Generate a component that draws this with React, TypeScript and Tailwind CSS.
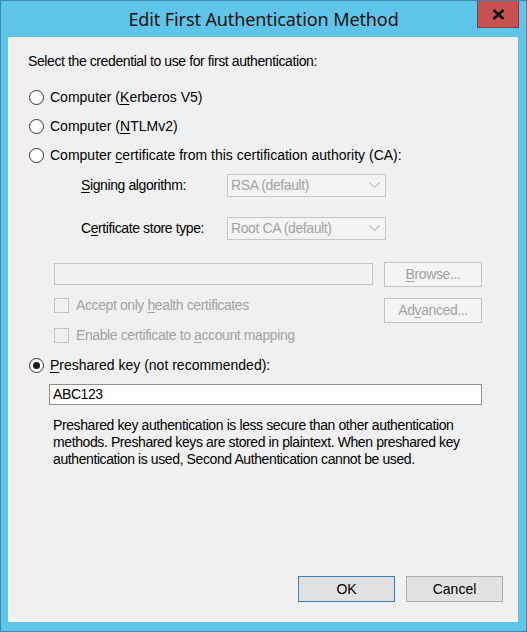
import type { ReactNode } from "react"

function Key({ children }: { children: ReactNode }) {
    return <span className="underline underline-offset-[2px] decoration-1">{children}</span>
}

function Radio({ checked = false, children }: { checked?: boolean; children: ReactNode }) {
    return (
        <div className="flex items-center h-[17px] ml-[1px] tracking-normal">
            <span className="w-[15px] h-[15px] rounded-full border border-[#333333] bg-white flex items-center justify-center shrink-0">
                {checked && <span className="w-[7px] h-[7px] rounded-full bg-[#1a1a1a]" />}
            </span>
            <span className="ml-[6px] whitespace-nowrap">{children}</span>
        </div>
    )
}

function Checkbox({ children }: { children: ReactNode }) {
    return (
        <div className="flex items-center h-[15px]">
            <span className="w-[15px] h-[15px] border border-[#c4c4c4] bg-[#f0f0f0] shrink-0" />
            <span className="ml-[7px] whitespace-nowrap text-[#a3a3a3]">{children}</span>
        </div>
    )
}

function Combo({ value }: { value: string }) {
    return (
        <div className="w-[159px] h-[23px] border border-[#c8c8c8] bg-[#f3f3f3] flex items-center justify-between pl-[3px] pr-[5px]">
            <span className="text-[#a3a3a3] whitespace-nowrap">{value}</span>
            <svg width="11" height="7" viewBox="0 0 11 7" fill="none">
                <polyline points="0.5,0.5 5.5,5.5 10.5,0.5" stroke="#c2c2c2" strokeWidth="1.2" />
            </svg>
        </div>
    )
}

function DisabledButton({ children }: { children: ReactNode }) {
    return (
        <div className="w-[98px] h-[25px] border border-[#c3c3c3] bg-[#f4f4f4] flex items-center justify-center text-[#a3a3a3]">
            {children}
        </div>
    )
}

export default function App() {
    return (
        <div className="w-[527px] h-[632px] bg-[#5fc5e8] border border-[#3a8ab0] relative flex flex-col font-['Liberation_Sans',Arial,sans-serif]">

            {/* Title bar */}
            <div className="h-[36px] flex items-center justify-center">
                <span className="font-['Noto_Sans',sans-serif] text-[18px] text-[#111] tracking-[-0.1px]">
                    Edit First Authentication Method
                </span>
            </div>
            <div className="absolute top-0 right-[7px] w-[42px] h-[27px] bg-[#c75050] border border-[#8d3a3a] border-t-0 flex items-center justify-center">
                <svg width="13" height="11" viewBox="0 0 13 11">
                    <path d="M1.5 1 L11.5 10 M11.5 1 L1.5 10" stroke="#111" strokeWidth="2.6" />
                </svg>
            </div>

            {/* Client area */}
            <div className="ml-[7px] w-[510px] h-[585px] bg-[#f0f0f0] border-l border-b border-[#f8fbfc] flex flex-col pl-[19px] pt-[16px] text-[14px] leading-[17px] tracking-[-0.4px] text-black">
                <p className="h-[17px] whitespace-nowrap">Select the credential to use for first authentication:</p>

                <div className="mt-[19px]">
                    <Radio>Computer (<Key>K</Key>erberos V5)</Radio>
                </div>
                <div className="mt-[12px]">
                    <Radio>Computer (<Key>N</Key>TLMv2)</Radio>
                </div>
                <div className="mt-[12px]">
                    <Radio>Computer <Key>c</Key>ertificate from this certification authority (CA):</Radio>
                </div>

                <div className="mt-[10px] ml-[53px] flex items-center h-[23px]">
                    <span className="w-[146px] whitespace-nowrap"><Key>S</Key>igning algorithm:</span>
                    <Combo value="RSA (default)" />
                </div>
                <div className="mt-[20px] ml-[53px] flex items-center h-[23px]">
                    <span className="w-[146px] whitespace-nowrap">C<Key>e</Key>rtificate store type:</span>
                    <Combo value="Root CA (default)" />
                </div>

                <div className="mt-[22px] ml-[26px] flex">
                    <div className="w-[319px] flex flex-col">
                        <div className="mt-[1px] h-[22px] border border-[#c6c6c6] bg-[#f0f0f0]" />
                        <div className="mt-[13px]">
                            <Checkbox>Accept only <Key>h</Key>ealth certificates</Checkbox>
                        </div>
                        <div className="mt-[15px]">
                            <Checkbox>Enable certificate to <Key>a</Key>ccount mapping</Checkbox>
                        </div>
                    </div>
                    <div className="ml-[11px] flex flex-col gap-[11px]">
                        <DisabledButton><Key>B</Key>rowse...</DisabledButton>
                        <DisabledButton>Ad<Key>v</Key>anced...</DisabledButton>
                    </div>
                </div>

                <div className="mt-[14px]">
                    <Radio checked><Key>P</Key>reshared key (not recommended):</Radio>
                </div>

                <div className="mt-[10px] ml-[21px] w-[433px] h-[21px] border border-[#8f8f8f] bg-white flex items-center pl-[3px]">
                    ABC123
                </div>

                <p className="mt-[12px] ml-[25px] w-[440px]">
                    Preshared key authentication is less secure than other authentication<br />
                    methods. Preshared keys are stored in plaintext. When preshared key<br />
                    authentication is used, Second Authentication cannot be used.
                </p>

                <div className="mt-auto mb-[19px] mr-[15px] flex justify-end gap-[11px] tracking-normal">
                    <button className="w-[97px] h-[26px] border border-[#3c7fb1] bg-[#e1e1e1] text-black">OK</button>
                    <button className="w-[97px] h-[26px] border border-[#adadad] bg-[#e1e1e1] text-black">Cancel</button>
                </div>
            </div>
        </div>
    )
}
